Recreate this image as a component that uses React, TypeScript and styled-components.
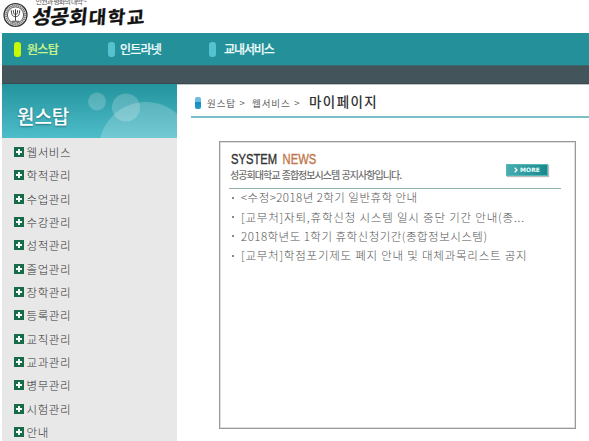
import React from "react";
import styled, { createGlobalStyle } from "styled-components";

const GlobalStyle = createGlobalStyle`
  * { box-sizing: border-box; }
  html, body { margin: 0; padding: 0; background: #fff; overflow: hidden; }
  body { font-family: "Noto Sans CJK KR", sans-serif; }
`;

const Page = styled.div`
  width: 589px;
  height: 441px;
  padding-left: 2px;
  display: flex;
  flex-direction: column;
  overflow: hidden;
  background: #fff;
`;

const Masthead = styled.header`
  height: 33px;
  flex: none;
  display: flex;
  align-items: flex-start;
  overflow: hidden;
`;

const Seal = styled.svg`
  width: 25px;
  height: 26px;
  margin: 2px 0 0 0.5px;
  flex: none;
`;

const Brand = styled.div`
  display: flex;
  flex-direction: column;
  margin-left: 5px;
`;

const Motto = styled.span`
  height: 5px;
  margin-top: -3px;
  padding-left: 3px;
  font-size: 7px;
  line-height: 8px;
  letter-spacing: -0.8px;
  color: #555;
  white-space: nowrap;
`;

const Wordmark = styled.div`
  display: flex;
  height: 28px;
  align-items: center;
`;

const Brush = styled.span<{ $size: number; $tilt: number; $width: number }>`
  width: ${(p) => p.$width}px;
  display: flex;
  justify-content: center;
  font-size: ${(p) => p.$size}px;
  line-height: 28px;
  font-weight: 700;
  color: #111;
  -webkit-text-stroke: 0.3px #111;
  transform: skew(${(p) => p.$tilt}deg, -5deg) scaleX(1.06);
`;

const NavBar = styled.nav`
  height: 32px;
  flex: none;
  display: flex;
  background: #23909a;
`;

const NavItem = styled.a<{ $active?: boolean; $width: number; $gap: number; $spacing: number }>`
  width: ${(p) => p.$width}px;
  display: flex;
  align-items: center;
  gap: ${(p) => p.$gap}px;
  font-size: 12px;
  line-height: 30px;
  font-weight: 500;
  letter-spacing: ${(p) => p.$spacing}px;
  white-space: nowrap;
  color: ${(p) => (p.$active ? "#c6f48a" : "#eefcfc")};
  -webkit-text-stroke: 0.2px currentColor;

  &::before {
    content: "";
    width: 7px;
    height: 15px;
    border-radius: 3px;
    background: ${(p) => (p.$active ? "#c5fa04" : "#54c3cf")};
  }
  &:first-child { margin-left: 12px; }
`;

const SubBar = styled.div`
  height: 19px;
  flex: none;
  background: #43545a;
  border-top: 1px solid #3b666d;
  border-bottom: 1px solid #3a4a50;
`;

const Body = styled.div`
  flex: 1;
  min-height: 0;
  display: flex;
`;

const Sidebar = styled.aside`
  width: 175px;
  flex: none;
  display: flex;
  flex-direction: column;
  background: #e8e8e8;
`;

const SideHero = styled.div`
  position: relative;
  height: 54px;
  flex: none;
  overflow: hidden;
  background: linear-gradient(#23939d, #4ebdca);
`;

const Bubbles = styled.svg`
  position: absolute;
  inset: 0;
  width: 175px;
  height: 54px;
`;

const SideTitle = styled.h2`
  position: relative;
  margin: 0;
  padding: 18px 0 0 15px;
  font-size: 19px;
  line-height: 28px;
  font-weight: 500;
  letter-spacing: -0.1px;
  color: #fff;
  text-shadow: 0 1px 2px #24757d;
`;

const Menu = styled.ul`
  list-style: none;
  margin: 0;
  padding: 3px 0 0 11.5px;
`;

const MenuItem = styled.li`
  height: 23.33px;
  display: flex;
  align-items: center;
  gap: 3px;
  font-size: 11.5px;
  letter-spacing: 0.6px;
  font-weight: 300;
  line-height: 23px;
  color: #333;
`;

const PlusSvg = styled.svg`
  width: 10px;
  height: 10px;
  flex: none;
  margin-top: -1px;
`;

const Main = styled.main`
  flex: 1;
  display: flex;
  flex-direction: column;
  padding-left: 14px;
  border-top: 1px solid #bfc4c6;
`;

const Breadcrumb = styled.div`
  height: 33px;
  flex: none;
  display: flex;
  align-items: center;
  padding: 5px 0 0 4px;
  border-bottom: 2px solid #7cbdca;
`;

const CrumbMark = styled.i`
  width: 6px;
  height: 12px;
  margin-right: 6px;
  border-radius: 2px;
  background: linear-gradient(#6bbde0 0 42%, #168bbf 42%, #269bcb);
`;

const Crumb = styled.span<{ $width: number }>`
  width: ${(p) => p.$width}px;
  font-size: 9.5px;
  line-height: 20px;
  letter-spacing: 0.9px;
  word-spacing: 0.6px;
  white-space: nowrap;
  color: #626262;
`;

const CrumbCurrent = styled.strong`
  margin-top: -4px;
  font-size: 13.5px;
  line-height: 20px;
  font-weight: 500;
  letter-spacing: 1.4px;
  color: #333;
`;

const NewsPanel = styled.section`
  width: 357px;
  height: 288px;
  margin: 23px 0 0 28px;
  padding: 9px 14px 0 9px;
  border: 1px solid #999;
  box-shadow: inset 0 0 0 1px #dedede;
`;

const NewsHead = styled.div`
  height: 38px;
  display: flex;
  justify-content: space-between;
  border-bottom: 1px solid #8fb3a8;
`;

const NewsHeading = styled.div`
  padding-left: 2px;
`;

const NewsTitle = styled.h3`
  margin: 0;
  height: 17px;
  font: 400 14px/17px "Liberation Sans", Arial, sans-serif;
  color: #333;
  -webkit-text-stroke: 0.35px currentColor;
  transform: scaleX(0.8);
  transform-origin: left;
  white-space: nowrap;

  span { color: #c27648; margin-left: 3px; }
`;

const NewsCaption = styled.p`
  margin: 0;
  margin-left: -1px;
  font-size: 10px;
  line-height: 13px;
  font-weight: 500;
  letter-spacing: -0.97px;
  word-spacing: 1px;
  white-space: nowrap;
  color: #707070;
`;

const MoreButton = styled.a`
  width: 42px;
  height: 12px;
  margin: 13px 13px 0 0;
  display: flex;
  align-items: center;
  justify-content: center;
  gap: 2px;
  border: 1px solid #58b6b7;
  background: linear-gradient(100deg, #48aeb0, #16898e);
  box-shadow: 1px 1px 1px #bbb;
  font: 700 6px/10px "DejaVu Sans", sans-serif;
  color: #e9ffff;

  svg { width: 4px; height: 6px; }
`;

const NewsList = styled.ul`
  list-style: none;
  margin: -1px 0 0;
  padding: 0 0 0 3px;
`;

const NewsItem = styled.li<{ $spacing: number }>`
  height: 19.4px;
  display: flex;
  align-items: center;
  gap: 7px;
  font-size: 11.5px;
  font-weight: 300;
  line-height: 19px;
  letter-spacing: ${(p) => p.$spacing}px;
  white-space: nowrap;
  color: #555;

  &::before {
    content: "";
    width: 2px;
    height: 2px;
    background: #888;
  }
`;

const brush = [
  { char: "성", size: 20, tilt: -8, width: 18 },
  { char: "공", size: 20, tilt: -8, width: 18 },
  { char: "회", size: 19, tilt: -6, width: 19 },
  { char: "대", size: 18, tilt: -4, width: 19 },
  { char: "학", size: 18, tilt: -4, width: 19 },
  { char: "교", size: 18, tilt: 0, width: 19 },
];

const menu = [
  "웹서비스", "학적관리", "수업관리", "수강관리", "성적관리", "졸업관리", "장학관리",
  "등록관리", "교직관리", "교과관리", "병무관리", "시험관리", "안내",
];

const news = [
  { text: "<수정>2018년 2학기 일반휴학 안내", spacing: 0.45 },
  { text: "[교무처]자퇴,휴학신청 시스템 일시 중단 기간 안내(종...", spacing: 0.81 },
  { text: "2018학년도 1학기 휴학신청기간(종합정보시스템)", spacing: 0.48 },
  { text: "[교무처]학점포기제도 폐지 안내 및 대체과목리스트 공지", spacing: 0.77 },
];

const PlusIcon = () => (
  <PlusSvg viewBox="0 0 10 10">
    <rect width="10" height="10" fill="#176b48" />
    <path d="M5 2v6M2 5h6" stroke="#f4fff8" strokeWidth="2" />
  </PlusSvg>
);

export default function App() {
  return (
    <>
      <GlobalStyle />
      <Page>
        <Masthead>
          <Seal viewBox="0 0 24 25" fill="none" stroke="#333">
            <circle cx="12" cy="12.5" r="11" strokeWidth="1.3" />
            <circle cx="12" cy="12.5" r="9.2" stroke="#777" strokeWidth="1.6" strokeDasharray="1.4 .5" />
            <circle cx="12" cy="12.5" r="7.8" strokeWidth=".8" />
            <path d="M12 7v11M8 8c0 5 1.5 6 4 6s4-1 4-6M10 8c0 3 .7 4 2 4s2-1 2-4M8.5 18.5h7" strokeWidth=".9" />
          </Seal>
          <Brand>
            <Motto>인권과 평화의 대학 ~</Motto>
            <Wordmark>
              {brush.map((b) => (
                <Brush key={b.char} $size={b.size} $tilt={b.tilt} $width={b.width}>{b.char}</Brush>
              ))}
            </Wordmark>
          </Brand>
        </Masthead>
        <NavBar>
          <NavItem $active $width={94} $gap={6} $spacing={-0.7}>원스탑</NavItem>
          <NavItem $width={101} $gap={5} $spacing={-0.8}>인트라넷</NavItem>
          <NavItem $width={90} $gap={8} $spacing={-1.1}>교내서비스</NavItem>
        </NavBar>
        <SubBar />
        <Body>
          <Sidebar>
            <SideHero>
              <Bubbles viewBox="0 0 175 54">
                <g fill="#fff">
                  <circle cx="95" cy="17.5" r="9" opacity=".2" />
                  <circle cx="124" cy="23.5" r="14" opacity=".2" />
                  <circle cx="144" cy="65" r="47" opacity=".2" />
                </g>
              </Bubbles>
              <SideTitle>원스탑</SideTitle>
            </SideHero>
            <Menu>
              {menu.map((label) => (
                <MenuItem key={label}><PlusIcon />{label}</MenuItem>
              ))}
            </Menu>
          </Sidebar>
          <Main>
            <Breadcrumb>
              <CrumbMark />
              <Crumb $width={45}>원스탑 &gt;</Crumb>
              <Crumb $width={57}>웹서비스 &gt;</Crumb>
              <CrumbCurrent>마이페이지</CrumbCurrent>
            </Breadcrumb>
            <NewsPanel>
              <NewsHead>
                <NewsHeading>
                  <NewsTitle>SYSTEM <span>NEWS</span></NewsTitle>
                  <NewsCaption>성공회대학교 종합정보시스템 공지사항입니다.</NewsCaption>
                </NewsHeading>
                <MoreButton>
                  <svg viewBox="0 0 4 6"><path d="M.7.7 3 3 .7 5.3" fill="none" stroke="#fff" strokeWidth="1.3" /></svg>
                  MORE
                </MoreButton>
              </NewsHead>
              <NewsList>
                {news.map((n) => (
                  <NewsItem key={n.text} $spacing={n.spacing}>{n.text}</NewsItem>
                ))}
              </NewsList>
            </NewsPanel>
          </Main>
        </Body>
      </Page>
    </>
  );
}
